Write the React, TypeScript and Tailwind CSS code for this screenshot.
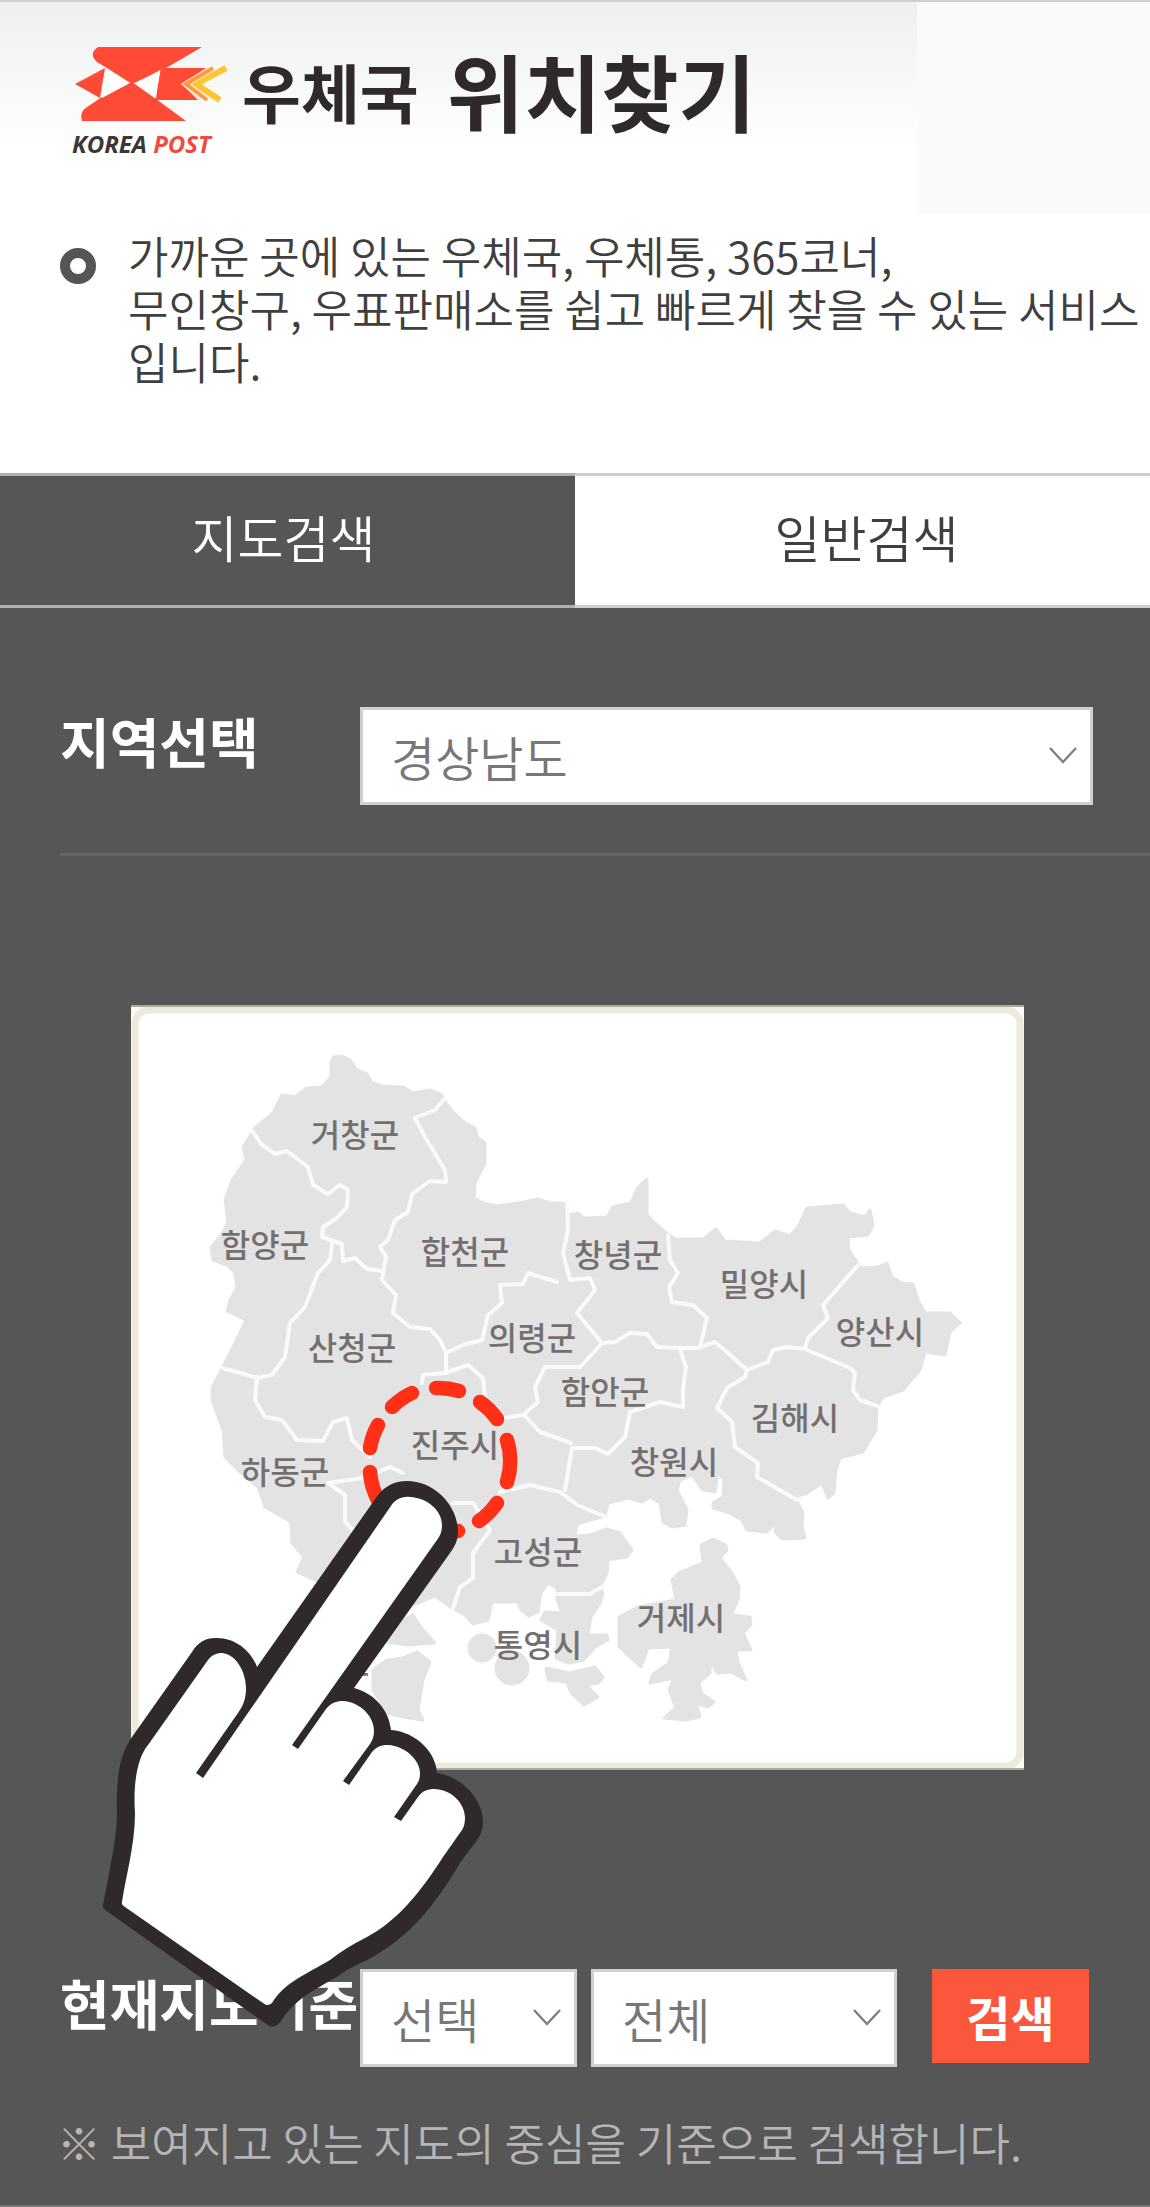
const sans = 'font-["Noto_Sans_CJK_KR",sans-serif]';

const mainland =
  '331,1062 334,1057 342,1056 350,1060 357,1070 367,1074 372,1083 383,1086 403,1087 413,1093 430,1090 442,1095 445,1102 453,1112 465,1123 475,1128 478,1138 485,1143 485,1163 475,1183 474,1198 483,1203 497,1206 525,1202 537,1199 550,1203 565,1203 568,1215 578,1213 584,1218 607,1217 613,1207 631,1203 638,1187 647,1179 647,1215 657,1225 668,1234 675,1239 703,1239 716,1229 725,1241 760,1243 775,1231 790,1236 798,1227 807,1208 843,1205 850,1213 865,1217 870,1210 873,1225 868,1235 848,1237 849,1250 857,1262 862,1268 878,1267 887,1263 892,1277 902,1283 913,1284 918,1300 925,1313 950,1313 960,1323 950,1332 945,1355 925,1352 920,1370 903,1390 883,1397 877,1407 876,1430 863,1452 840,1458 836,1470 834,1493 828,1498 822,1483 807,1493 795,1497 803,1513 802,1527 805,1538 782,1539 775,1532 777,1522 767,1532 747,1530 742,1520 727,1512 713,1508 713,1503 723,1497 724,1480 718,1472 715,1492 703,1490 692,1475 680,1480 677,1490 687,1510 685,1525 672,1527 663,1522 660,1503 650,1497 642,1502 628,1498 608,1503 605,1516 577,1524 575,1536 590,1535 607,1529 620,1533 632,1550 627,1557 608,1560 607,1573 600,1587 603,1593 600,1603 591,1617 588,1635 607,1635 608,1640 595,1647 584,1660 569,1663 556,1658 558,1630 541,1620 545,1612 562,1613 557,1600 557,1588 548,1583 541,1593 538,1612 529,1616 521,1610 518,1602 492,1602 488,1620 473,1624 465,1615 452,1608 435,1596 400,1610 315,1580 297,1572 304,1557 292,1543 291,1522 265,1507 258,1487 240,1472 225,1457 223,1430 212,1400 212,1388 223,1367 235,1343 246,1320 227,1311 230,1300 237,1288 235,1273 227,1265 213,1260 211,1247 220,1237 228,1223 225,1200 232,1180 246,1160 243,1147 255,1128 273,1113 282,1095 295,1097 307,1088 322,1087 331,1077';

const islands = [
  '701,1545 713,1539 726,1545 727,1550 720,1558 732,1573 739,1587 738,1600 731,1615 750,1617 751,1625 743,1633 751,1650 736,1650 738,1662 746,1680 731,1672 717,1673 710,1660 710,1673 699,1683 701,1693 714,1702 708,1707 696,1703 700,1717 686,1720 664,1718 676,1708 669,1690 674,1678 650,1683 652,1675 669,1663 672,1647 648,1648 641,1667 619,1647 619,1617 638,1607 676,1600 672,1580 679,1573 703,1563',
  '546,1668 569,1673 595,1667 603,1677 598,1683 586,1685 598,1697 584,1705 571,1693 567,1682 548,1680',
  '387,1660 403,1658 417,1652 430,1662 423,1680 418,1710 423,1720 403,1717 387,1713 373,1690 373,1670',
  '403,1620 413,1615 423,1630 435,1643 407,1645 387,1642',
];

const borders = [
  '253,1132 262,1145 275,1154 287,1151 308,1167 313,1185 328,1194 340,1185 348,1190 347,1207 337,1218 323,1227 322,1237 342,1244 343,1261 355,1258 367,1269 382,1271',
  '445,1098 435,1110 415,1118 425,1137 445,1170 446,1182 430,1181 412,1194 408,1212 395,1220 388,1240 380,1247 386,1257 382,1280 396,1295 393,1313 410,1327 430,1329 440,1340 446,1353 446,1373',
  '332,1243 330,1260 318,1273 305,1307 290,1323 285,1357 272,1375 257,1378 223,1368',
  '446,1353 463,1345 482,1340 488,1315 502,1303 500,1285 523,1284 528,1273 557,1282',
  '567,1203 568,1230 563,1253 570,1280 590,1278 595,1290 577,1313 602,1343 580,1367 545,1367 535,1387 538,1402 523,1415 503,1418',
  '602,1343 615,1342 630,1333 647,1334 657,1347 683,1348 698,1348 715,1342 727,1352 747,1370 768,1362 773,1350 787,1347 805,1349',
  '668,1235 670,1260 678,1273 669,1287 672,1302 693,1305 707,1318 700,1347',
  '859,1264 823,1305 828,1318 808,1338 805,1349 850,1368 855,1373 853,1390 860,1400 877,1406',
  '747,1370 745,1377 727,1388 717,1408 732,1422 735,1447 758,1463 757,1477 797,1500',
  '680,1349 686,1367 683,1390 683,1407 660,1402 630,1412 625,1437 608,1454 595,1448 572,1448 565,1490',
  '525,1416 540,1432 571,1443',
  '500,1492 530,1485 560,1492 577,1505 606,1517',
  '422,1383 423,1375 445,1373 468,1365 483,1378 485,1397',
  '257,1377 255,1400 265,1417 282,1420 297,1440 323,1441 333,1422 347,1418 352,1440 370,1457',
  '403,1473 390,1467 363,1478 328,1483 345,1495 345,1522 353,1530',
  '453,1503 473,1503 490,1530 473,1553 473,1578 460,1587 453,1608',
  '557,1594 590,1594 602,1587',
];

const regions: [string, number, number][] = [
  ['거창군', 355, 1135],
  ['함양군', 265, 1245],
  ['합천군', 465, 1252],
  ['창녕군', 618, 1255],
  ['밀양시', 764, 1284],
  ['양산시', 880, 1332],
  ['산청군', 352, 1348],
  ['의령군', 532, 1338],
  ['함안군', 605, 1392],
  ['김해시', 795, 1418],
  ['진주시', 455, 1445],
  ['창원시', 674, 1462],
  ['하동군', 285, 1472],
  ['고성군', 538, 1552],
  ['거제시', 681, 1618],
  ['통영시', 538, 1645],
  ['남해군', 328, 1661],
];

const dashes = [
  'M436,1388A71,71 0 0 1 459,1391',
  'M480,1402A71,71 0 0 1 497,1419',
  'M507,1440A71,71 0 0 1 507,1482',
  'M497,1503A71,71 0 0 1 479,1521',
  'M458,1531A71,71 0 0 1 440,1533',
  'M378,1500A71,71 0 0 1 370,1472',
  'M370,1448A71,71 0 0 1 378,1425',
  'M392,1407A71,71 0 0 1 412,1393',
];

function PostLogo() {
  return (
    <svg viewBox="72 44 162 82" className="h-[82px] w-[162px]" aria-hidden="true">
      <g fill="#ff4b36">
        <path d="M98,47H202L166,68L132,84L107,68L97,62Q88,54 98,47Z" />
        <path d="M132,82L156,99L186,121H82Q79,112 87,107L102,97Z" />
        <path d="M75,84L105,68L100,98Z" />
        <path d="M161,68H206L182,84L198,100H155Z" />
      </g>
      <path d="M107,70L128,84L102,98Z M160,70L136,84L156,98Z" fill="#fff" />
      <path d="M213,68L186,84L207,100" fill="none" stroke="#ff9a3d" strokeWidth="4" />
      <path d="M226,68L196,84L220,100" fill="none" stroke="#ffc531" strokeWidth="6" />
      <path d="M208,68L181,84L201,100M219,68L191,84L213,100" fill="none" stroke="#ffd9bd" strokeWidth="1" />
    </svg>
  );
}

function Dropdown({ id, label, options, className }: { id: string; label: string; options: string[]; className: string }) {
  return (
    <div className={'relative min-w-0 ' + className}>
      <select
        id={id}
        aria-label={label}
        className="h-[98px] w-full appearance-none rounded-none border-[3px] border-[#d0d0d0] bg-white pt-1 pb-1 pl-7 text-[48px] leading-[80px] font-[350] text-[#777] outline-none"
      >
        {options.map((o) => (
          <option key={o}>{o}</option>
        ))}
      </select>
      <svg viewBox="0 0 28 18" className="pointer-events-none absolute top-10 right-4 h-[18px] w-7" fill="none" stroke="#808080" strokeWidth="2.4" aria-hidden="true">
        <path d="M1,1L14,15L27,1" />
      </svg>
    </div>
  );
}

function RegionMap() {
  return (
    <svg viewBox="131 1005 893 765" className={'relative z-10 block w-full overflow-visible ' + sans} role="group" aria-label="경상남도 지도">
      <rect x="131" y="1005" width="893" height="765" fill="#fbfaf3" />
      <rect x="135" y="1010" width="885" height="756" rx="14" fill="#fff" stroke="#eeeadb" strokeWidth="7" />
      <path d="M131,1006H1024M131,1769H1024" stroke="#aaa99f" strokeWidth="2" />
      <g fill="#e3e3e3" stroke="#e3e3e3" strokeWidth="3" strokeLinejoin="round">
        <polygon points={mainland} />
        {islands.map((p) => (
          <polygon key={p} points={p} />
        ))}
        <circle cx="512" cy="1668" r="16" />
        <circle cx="482" cy="1648" r="13" />
      </g>
      <g fill="none" stroke="#fafafa" strokeWidth="4" strokeLinejoin="round" strokeLinecap="round">
        {borders.map((p) => (
          <polyline key={p} points={p} />
        ))}
      </g>
      <g fill="#757070" fontSize="32" fontWeight="500" textAnchor="middle">
        {regions.map(([name, x, y]) => (
          <a key={name} href="#result">
            <text x={x} y={y + 12}>{name}</text>
          </a>
        ))}
      </g>
      <g fill="none" stroke="#ff3016" strokeWidth="14.5" strokeLinecap="round">
        {dashes.map((d) => (
          <path key={d} d={d} />
        ))}
      </g>
      <g className="pointer-events-none">
        <path
          fill="#2f2929"
          d="M103,1905C110,1870 117,1835 117,1813C116,1780 119,1755 132,1737L192,1652C198,1642 206,1638 215,1638C234,1637 251,1650 257,1667L378,1495C386,1485 396,1481 407,1481C434,1481 458,1505 458,1532C458,1540 455,1546 450,1553L354,1688C376,1694 389,1711 391,1730C416,1732 436,1752 437,1773C463,1777 483,1800 483,1822C483,1830 480,1836 477,1840L460,1863C437,1902 410,1938 367,1960Q356,1965 347,1970C320,1989 302,1992 283,2018Q275,2032 265,2023L108,1912Q102,1909 103,1905Z"
        />
        <path
          fill="#fff"
          d="M122,1902C126,1875 135,1845 135,1813C133,1785 137,1758 148,1745L208,1660C212,1655 216,1653 222,1653C236,1654 246,1672 246,1688C246,1699 243,1706 238,1713L196,1773L203,1778L393,1503C398,1498 404,1496 410,1497C428,1498 442,1511 442,1525C442,1532 440,1536 437,1540L292,1745L298,1749L326,1709C331,1703 336,1701 343,1701C360,1702 374,1716 374,1731C374,1737 372,1741 370,1744L343,1781L349,1785L372,1752C377,1746 382,1745 388,1745C405,1746 420,1760 420,1773C420,1778 419,1781 417,1784L394,1817L401,1821L418,1797C422,1791 428,1789 434,1789C451,1789 465,1803 465,1818C465,1823 464,1827 462,1830L443,1857C420,1893 397,1921 367,1937Q345,1948 330,1960C305,1975 285,1982 272,2003Q267,2007 263,2003L125,1907Q121,1905 122,1902Z"
        />
      </g>
    </svg>
  );
}

export default function App() {
  return (
    <div className={'flex min-h-screen flex-col overflow-x-hidden bg-white text-[#444] ' + sans}>
      <header className="flex h-[213px] justify-between border-t-2 border-[#d0d0d0] bg-[linear-gradient(#eef0f0,#fff_150px)]">
        <div className="flex items-start pt-[42px] pl-[72px]">
          <div>
            <PostLogo />
            <p className="pt-1 font-['Open_Sans',sans-serif] text-[24px] leading-[28px] font-bold text-[#3c3636] italic">
              KOREA <span className="text-[#f04a40]">POST</span>
            </p>
          </div>
          <h1 className="ml-2 flex items-center gap-7 whitespace-nowrap text-[#2f2929]">
            <span className="text-[64px] leading-[88px] font-bold">우체국</span>
            <span className="text-[84px] leading-[92px] font-bold">위치찾기</span>
          </h1>
        </div>
        <div className="w-[233px] bg-[#fafafa]" />
      </header>

      <section className="flex h-[260px] items-start pt-4 pl-[60px]">
        <span className="mt-[19px] mr-8 size-9 shrink-0 rounded-full border-[10px] border-[#555]" />
        <p className="text-[44px] leading-[53px] font-[350] break-all text-[#3f3f3f]">
          가까운 곳에 있는 우체국, 우체통, 365코너,
          <br />
          무인창구, 우표판매소를 쉽고 빠르게 찾을 수 있는 서비스입니다.
        </p>
      </section>

      <nav className="flex h-[135px] text-[50px] font-[350]" role="tablist">
        <button role="tab" aria-selected="true" className="flex-1 border-y-3 border-[#b0b0b0] bg-[#565656] pr-2 pb-2 text-white">
          지도검색
        </button>
        <button role="tab" aria-selected="false" className="flex-1 border-y-3 border-[#cfcfcf] bg-white pb-2 pl-2 text-[#3f3f3f]">
          일반검색
        </button>
      </nav>

      <main className="flex-1 border-b-2 border-[#777] bg-[#565656] pt-[99px]">
        <div className="flex items-start pr-[57px] pl-[60px]">
          <label htmlFor="region" className="w-[300px] shrink-0 text-[54px] leading-[68px] font-bold whitespace-nowrap text-white">
            지역선택
          </label>
          <Dropdown id="region" label="지역선택" options={['경상남도']} className="flex-1" />
        </div>
        <hr className="mt-[48px] ml-[60px] border-t-3 border-[#636363]" />

        <div className="pt-[149px] pr-[126px] pl-[131px]">
          <RegionMap />
        </div>

        <form className="mt-[199px] flex items-start pr-[61px] pl-[60px]" onSubmit={(e) => e.preventDefault()}>
          <label htmlFor="kind" className="w-[300px] shrink-0 text-[54px] leading-[68px] font-bold whitespace-nowrap text-white">
            현재지도기준
          </label>
          <Dropdown id="kind" label="현재지도기준" options={['선택']} className="flex-[217]" />
          <Dropdown id="scope" label="범위" options={['전체']} className="ml-[14px] flex-[306]" />
          <button type="submit" className="ml-[35px] h-[94px] w-[157px] shrink-0 bg-[#fa573c] text-[48px] font-bold text-white">
            검색
          </button>
        </form>
        <p className="mt-[43px] pl-[57px] text-[44px] leading-[64px] font-[350] text-[#b5b5b5]">※ 보여지고 있는 지도의 중심을 기준으로 검색합니다.</p>
      </main>
    </div>
  );
}
